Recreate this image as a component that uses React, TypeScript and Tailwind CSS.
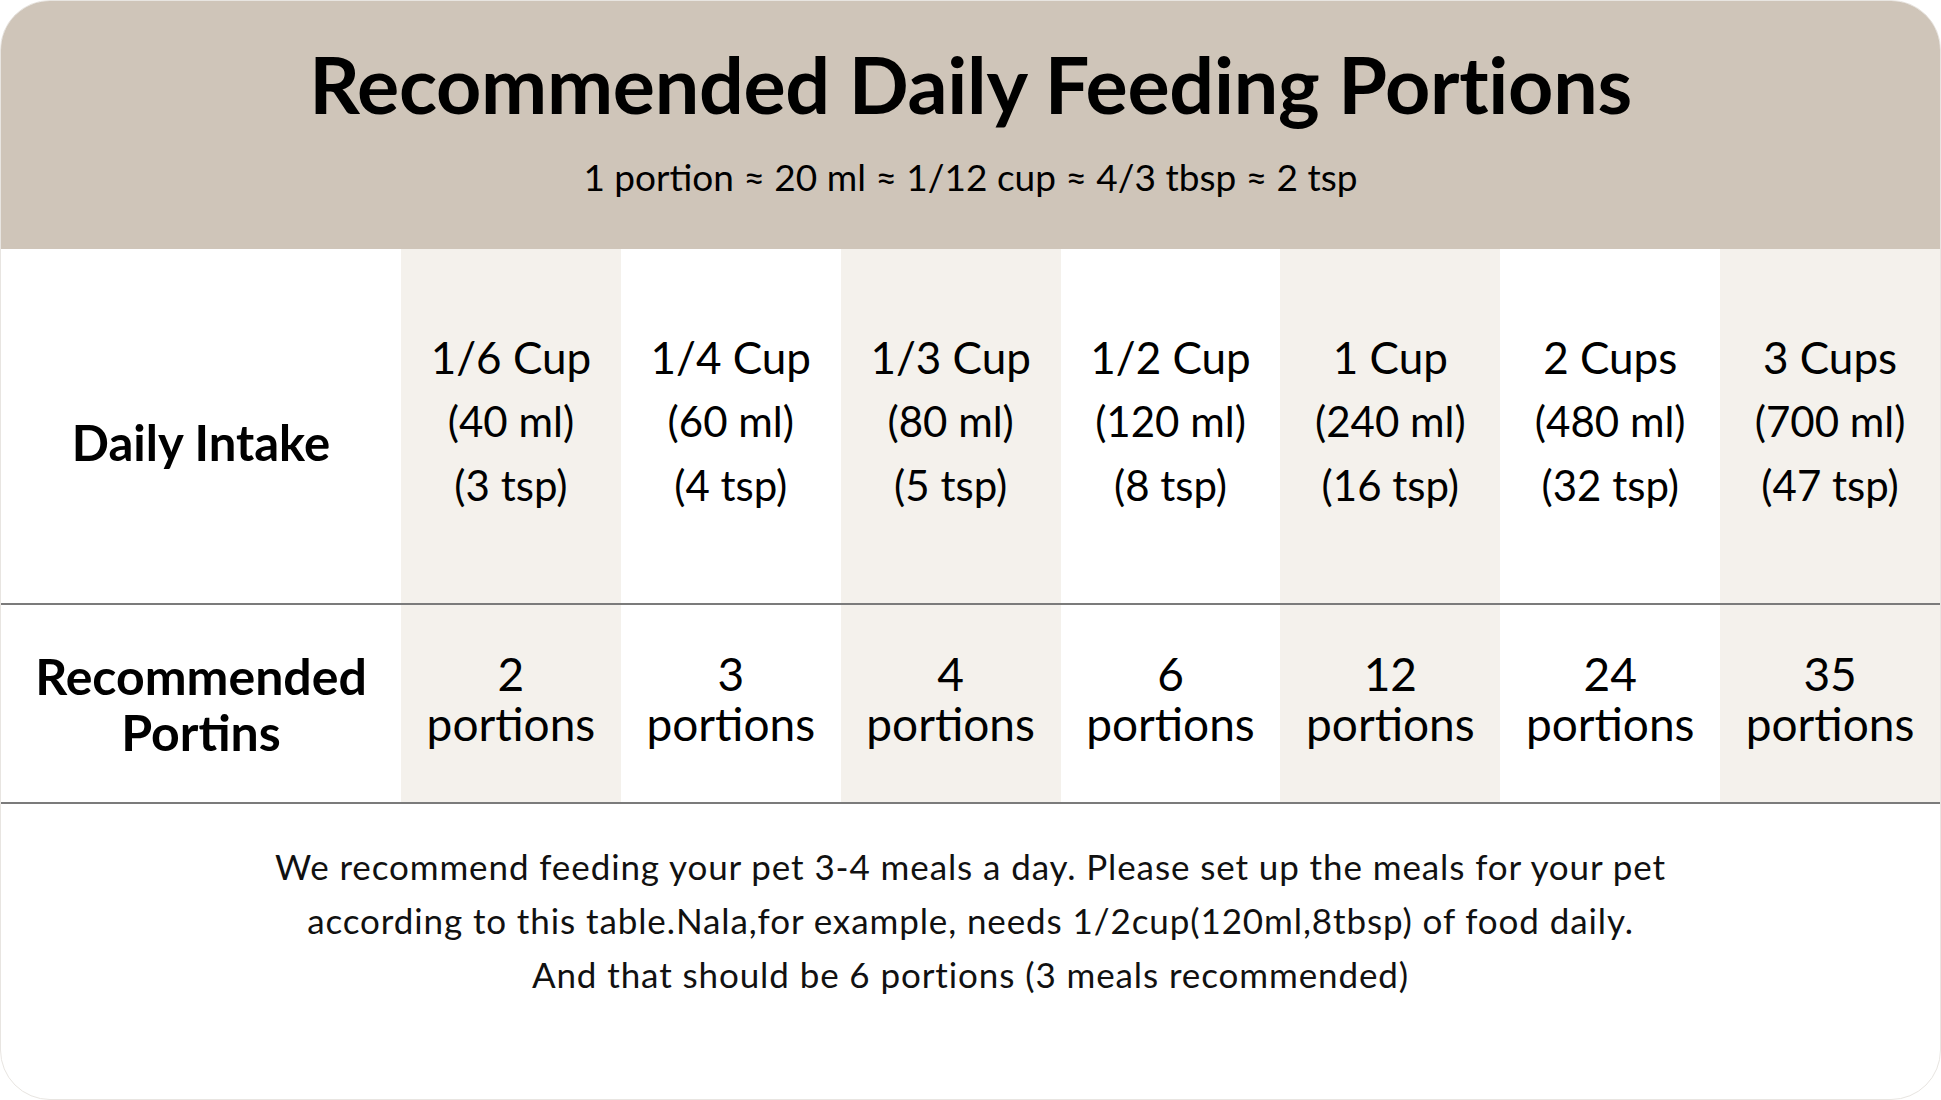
const columns = [
  { cup: '1/6 Cup', ml: '(40 ml)', tsp: '(3 tsp)', portions: '2' },
  { cup: '1/4 Cup', ml: '(60 ml)', tsp: '(4 tsp)', portions: '3' },
  { cup: '1/3 Cup', ml: '(80 ml)', tsp: '(5 tsp)', portions: '4' },
  { cup: '1/2 Cup', ml: '(120 ml)', tsp: '(8 tsp)', portions: '6' },
  { cup: '1 Cup', ml: '(240 ml)', tsp: '(16 tsp)', portions: '12' },
  { cup: '2 Cups', ml: '(480 ml)', tsp: '(32 tsp)', portions: '24' },
  { cup: '3 Cups', ml: '(700 ml)', tsp: '(47 tsp)', portions: '35' },
]

export default function App() {
  return (
    <div className="w-[1941px] h-[1100px] bg-white font-['Lato','Noto_Sans',sans-serif] text-black">
      <div className="h-full rounded-[50px] border border-[#e8e5e1] overflow-hidden flex flex-col bg-white">
        {/* Header */}
        <div className="h-[248px] shrink-0 bg-[#cfc5b9] flex flex-col items-center">
          <h1 className="mt-[38px] text-[79px] leading-[90px] font-bold tracking-[-0.3px]">
            Recommended Daily Feeding Portions
          </h1>
          <p className="mt-[28px] text-[37px] leading-[40px]">
            1 portion ≈ 20 ml ≈ 1/12 cup ≈ 4/3 tbsp ≈ 2 tsp
          </p>
        </div>

        {/* Daily intake row */}
        <div className="grid grid-cols-[400px_repeat(7,1fr)] h-[356px] border-b-2 border-[#7b7b7b]">
          <div className="flex items-center justify-center pt-[34px] text-[49px] font-bold">Daily Intake</div>
          {columns.map((c, i) => (
            <div
              key={c.cup}
              className={`flex flex-col items-center justify-center pb-[10px] ${i % 2 === 0 ? 'bg-[#f4f1ec]' : 'bg-white'}`}
            >
              <div className="text-[44px] leading-[64px]">{c.cup}</div>
              <div className="text-[42px] leading-[64px]">{c.ml}</div>
              <div className="text-[42px] leading-[64px]">{c.tsp}</div>
            </div>
          ))}
        </div>

        {/* Portions row */}
        <div className="grid grid-cols-[400px_repeat(7,1fr)] h-[199px] border-b-2 border-[#7b7b7b]">
          <div className="flex flex-col items-center justify-center text-[50px] leading-[56px] font-bold">
            <span>Recommended</span>
            <span>Portins</span>
          </div>
          {columns.map((c, i) => (
            <div
              key={c.cup}
              className={`flex flex-col items-center justify-center pb-[10px] ${i % 2 === 0 ? 'bg-[#f4f1ec]' : 'bg-white'}`}
            >
              <div className="text-[46px] leading-[50px]">{c.portions}</div>
              <div className="text-[46px] leading-[50px]">portions</div>
            </div>
          ))}
        </div>

        {/* Footer note */}
        <div className="flex-1 flex flex-col items-center pt-[35px] text-[35px] leading-[54px] tracking-[0.9px] text-[#111]">
          <p>We recommend feeding your pet 3-4 meals a day. Please set up the meals for your pet</p>
          <p>according to this table.Nala,for example, needs 1/2cup(120ml,8tbsp) of food daily.</p>
          <p>And that should be 6 portions (3 meals recommended)</p>
        </div>
      </div>
    </div>
  )
}
